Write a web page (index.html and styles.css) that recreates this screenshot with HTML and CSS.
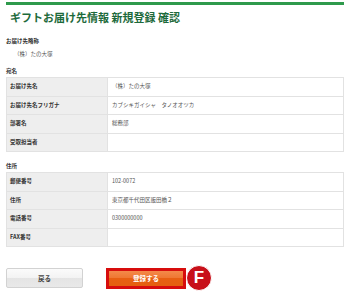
FILE: index.html
```html
<!DOCTYPE html>
<html lang="ja">
<head>
<meta charset="utf-8">
<link rel="stylesheet" href="styles.css">
</head>
<body>
<div class="page">
  <div class="bar"></div>
  <h1 class="title">ギフトお届け先情報 新規登録 確認</h1>

  <div class="sec-label sec-first">お届け先略称</div>
  <div class="alias">（株）たの大塚</div>

  <div class="sec-label sec-gap">宛名</div>
  <table class="info">
    <tr><th>お届け先名</th><td>（株）たの大塚</td></tr>
    <tr><th>お届け先名フリガナ</th><td>カブシキガイシャ　タノオオツカ</td></tr>
    <tr><th>部署名</th><td>総務部</td></tr>
    <tr><th>受取担当者</th><td></td></tr>
  </table>

  <div class="sec-label sec-gap2">住所</div>
  <table class="info">
    <tr><th>郵便番号</th><td>102-0072</td></tr>
    <tr><th>住所</th><td>東京都千代田区飯田橋２</td></tr>
    <tr><th>電話番号</th><td>0300000000</td></tr>
    <tr><th>FAX番号</th><td></td></tr>
  </table>

  <div class="actions">
    <button class="btn-back">戻る</button>
    <div class="submit-wrap">
      <button class="btn-submit">登録する</button>
      <span class="badge">F</span>
    </div>
  </div>
</div>
</body>
</html>
```

FILE: styles.css
```css
html, body {
  margin: 0;
  padding: 0;
  background: #ffffff;
}
body {
  font-family: "Noto Sans CJK JP", "Noto Sans", sans-serif;
  color: #333;
}
.page {
  width: 338px;
  padding: 2px 4px 0 6px;
}
.bar {
  height: 3px;
  background: #2e9a4c;
}
.title {
  margin: 5px 0 0 4px;
  font-size: 11px;
  line-height: 14px;
  font-weight: bold;
  color: #1d6a3b;
  letter-spacing: 0;
}
.sec-label {
  font-size: 5.5px;
  line-height: 8px;
  font-weight: bold;
  color: #333;
}
.sec-first { margin-top: 13px; }
.sec-gap { margin-top: 9px; }
.sec-gap2 { margin-top: 10px; }
.alias {
  margin: 5px 0 0 8px;
  font-size: 5.5px;
  line-height: 8px;
  color: #555;
}
.info {
  width: 100%;
  margin-top: 2px;
  border-collapse: collapse;
  border: 1px solid #dcdcdc;
}
.info th, .info td {
  border: 1px solid #e2e2e2;
  font-size: 5.5px;
  line-height: 7.5px;
  padding: 5px 3px;
  text-align: left;
}
.info th {
  width: 94px;
  background: #eeeeee;
  font-weight: bold;
  color: #333;
}
.info td {
  background: #fff;
  color: #555;
  padding-left: 4px;
}
.actions {
  margin-top: 18px;
  display: flex;
  align-items: center;
  gap: 23px;
}
.btn-back {
  width: 77px;
  height: 20px;
  border: 1px solid #d2d2d2;
  border-radius: 2px;
  background: linear-gradient(#fbfbfb 0%, #f3f3f3 50%, #e4e4e4 50%, #e9e9e9 100%);
  font-family: inherit;
  font-size: 6.5px;
  font-weight: bold;
  color: #444;
  padding: 0;
}
.submit-wrap {
  display: flex;
  align-items: center;
}
.btn-submit {
  width: 80px;
  height: 21px;
  border: 3px solid #d70d0d;
  background: linear-gradient(#f38a4a 0%, #ef7530 50%, #e85f12 50%, #e4600f 100%);
  font-family: inherit;
  font-size: 6.5px;
  font-weight: bold;
  color: #fff;
  padding: 0;
}
.badge {
  width: 24px;
  height: 24px;
  border-radius: 50%;
  border: 1px solid #fff;
  background: #c8101a;
  color: #fff;
  font-family: "Liberation Sans", Arial, sans-serif;
  font-weight: bold;
  font-size: 17px;
  line-height: 24px;
  text-align: center;
}
```
